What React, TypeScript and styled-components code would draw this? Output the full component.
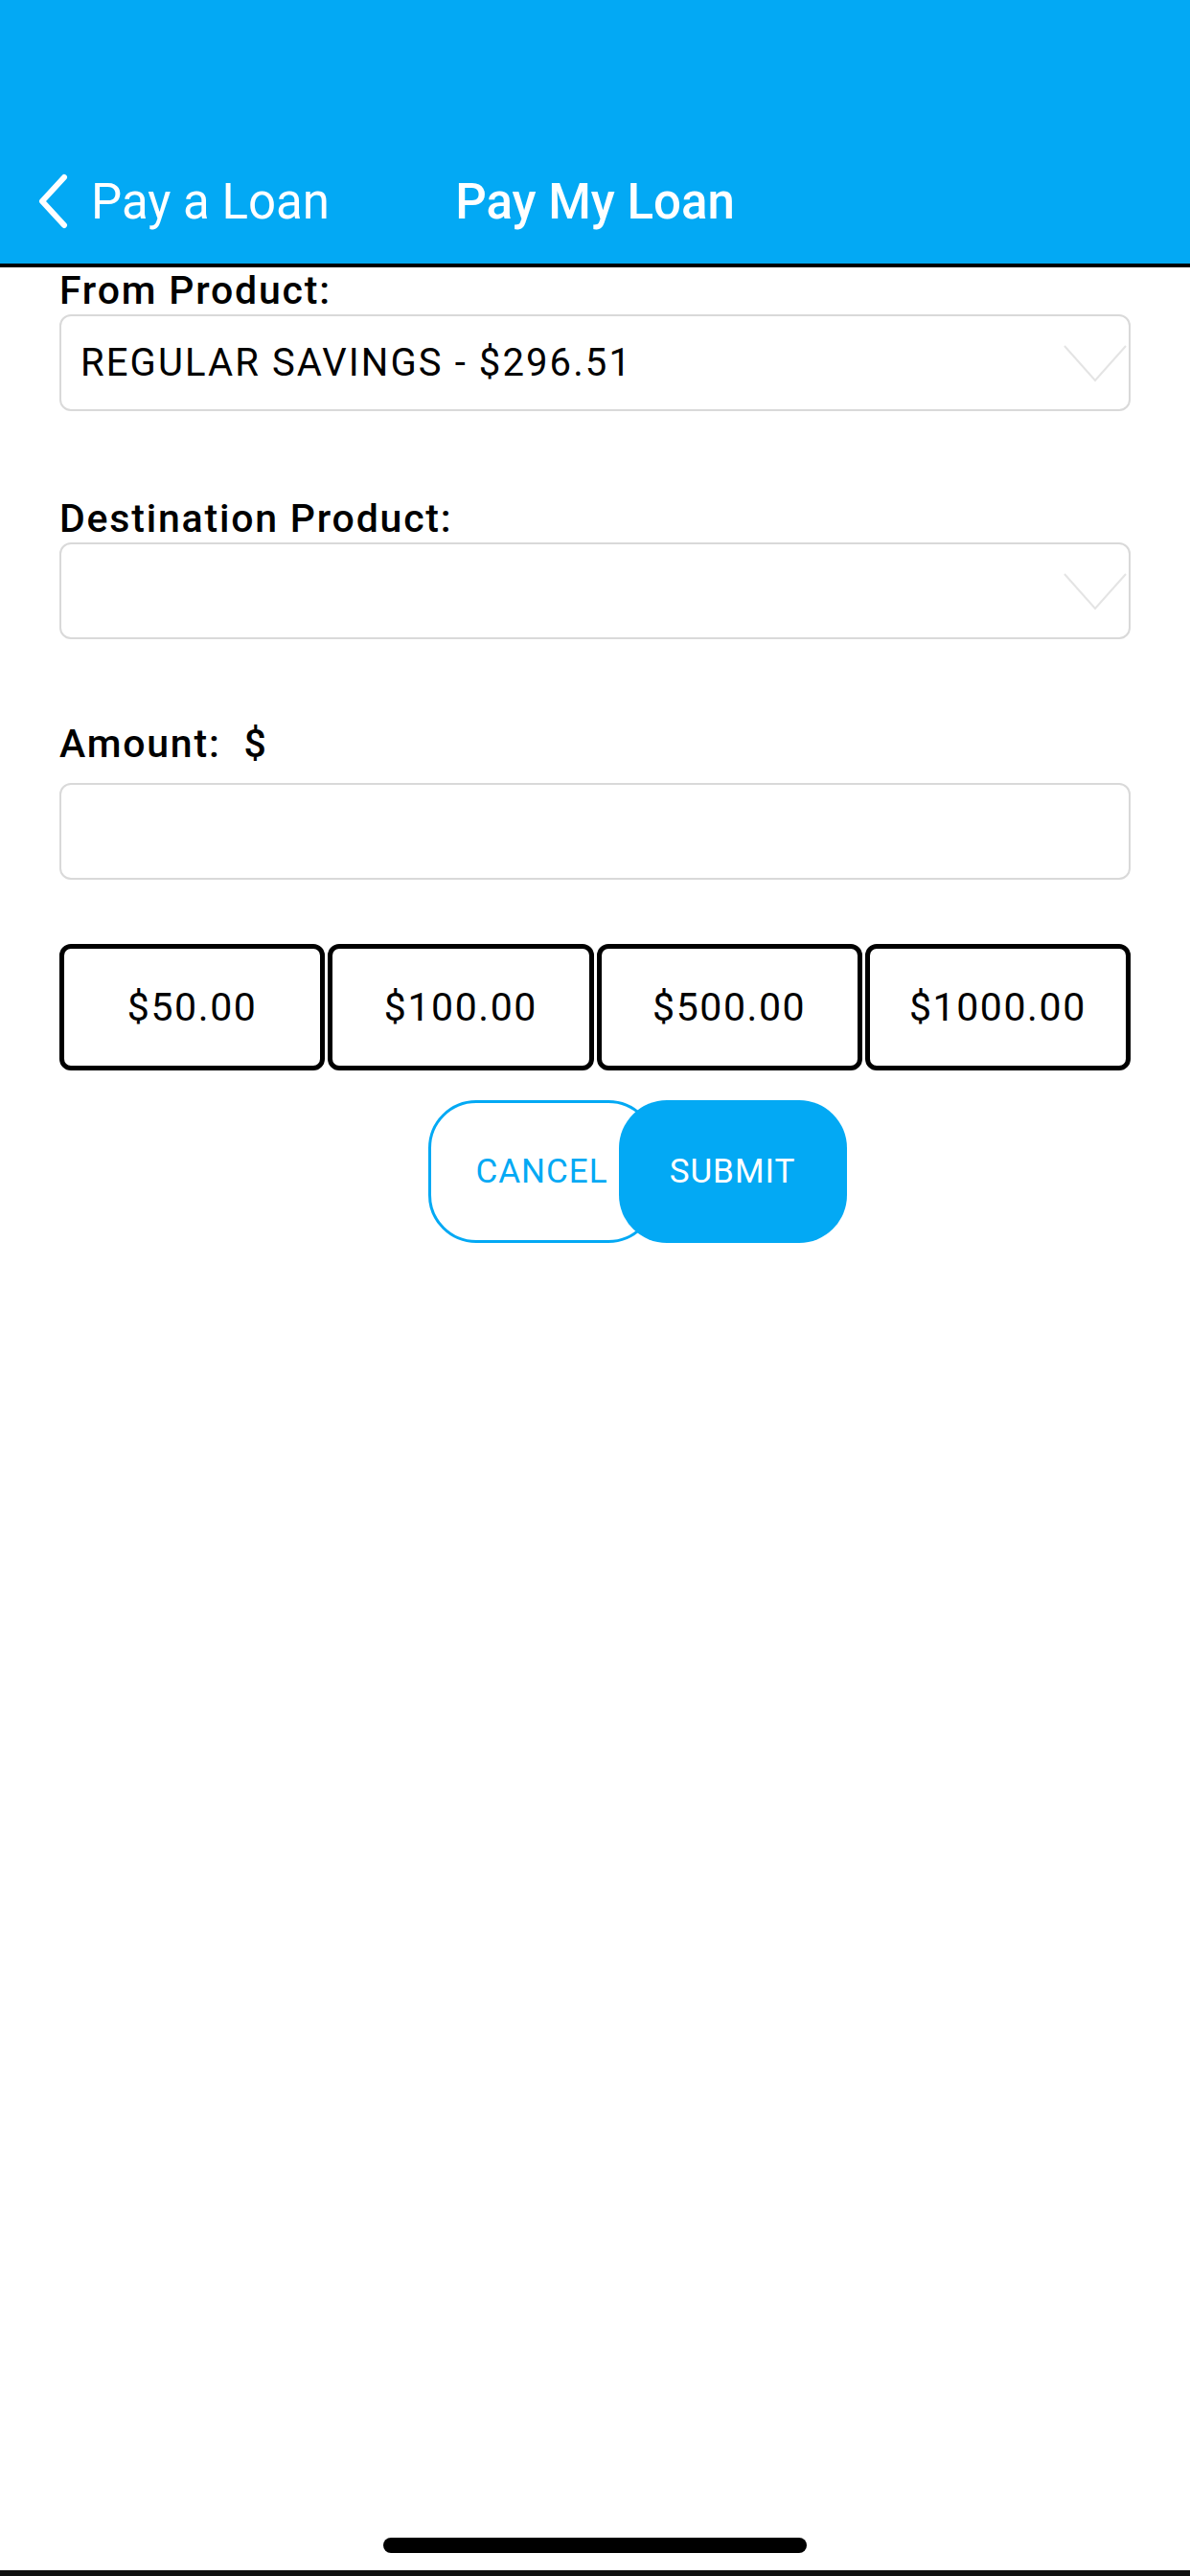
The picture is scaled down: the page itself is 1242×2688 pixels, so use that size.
import React, {FC} from "react";
import styled, {createGlobalStyle} from "styled-components";

const blue = "#03a9f4"

const GlobalStyle = createGlobalStyle`
  html, body {
    margin: 0;
    padding: 0;
    background: #fff;
  }
  body {
    font-family: Roboto, "Liberation Sans", sans-serif;
    -webkit-font-smoothing: antialiased;
  }
  * {
    box-sizing: border-box;
  }
`

const amounts = ["$50.00", "$100.00", "$500.00", "$1000.00"]

const BackChevron: FC = () => (
  <svg width="36" height="58" viewBox="0 0 36 58">
    <path d="M30 4 L7 29 L30 54" fill="none" stroke="#fff" strokeWidth="6" strokeLinecap="round" strokeLinejoin="round"/>
  </svg>
)

const SelectChevron: FC = () => (
  <svg width="66" height="40" viewBox="0 0 66 40">
    <path d="M1 2 L33 38 L65 2" fill="none" stroke="#e4e4e4" strokeWidth="2"/>
  </svg>
)

const Select: FC<{value?: string}> = ({value}) => (
  <SelectBox>
    <SelectValue>{value}</SelectValue>
    <SelectChevron/>
  </SelectBox>
)

export default function App() {
  return (
    <Page>
      <GlobalStyle/>
      <Header>
        <NavBar>
          <BackButton>
            <BackChevron/>
            <BackText>Pay a Loan</BackText>
          </BackButton>
          <Title>Pay My Loan</Title>
          <div/>
        </NavBar>
      </Header>

      <Content>
        <Label>From Product:</Label>
        <Select value="REGULAR SAVINGS - $296.51"/>

        <Label top={88}>Destination Product:</Label>
        <Select/>

        <Label top={85} bottom={16}>Amount:&nbsp; $</Label>
        <AmountInput/>

        <QuickRow>
          {amounts.map(a => (
            <QuickButton key={a}>{a}</QuickButton>
          ))}
        </QuickRow>

        <ActionRow>
          <CancelButton>CANCEL</CancelButton>
          <SubmitButton>SUBMIT</SubmitButton>
        </ActionRow>
      </Content>

      <HomeIndicator/>
      <BottomEdge/>
    </Page>
  )
}

const Page = styled.div`
  min-height: 2688px;
  display: flex;
  flex-direction: column;
  background: #fff;
`

const Header = styled.header`
  height: 279px;
  background: ${blue};
  border-bottom: 4px solid #000;
  padding-top: 145px;
`

const NavBar = styled.div`
  display: grid;
  grid-template-columns: 1fr auto 1fr;
  align-items: center;
  height: 130px;
`

const BackButton = styled.div`
  display: flex;
  align-items: center;
  padding-left: 37px;
  gap: 22px;
  color: #fff;
`

const BackText = styled.span`
  font-size: 51px;
  font-weight: 400;
`

const Title = styled.div`
  color: #fff;
  font-size: 51px;
  font-weight: 500;
`

const Content = styled.main`
  flex: 1;
  padding: 0 62px;
`

const Label = styled.div<{top?: number, bottom?: number}>`
  margin-top: ${props => props.top || 0}px;
  margin-bottom: ${props => props.bottom || 0}px;
  font-size: 41px;
  line-height: 49px;
  font-weight: 500;
  letter-spacing: 1.8px;
  color: #000;
`

const SelectBox = styled.div`
  display: flex;
  align-items: center;
  height: 101px;
  padding: 0 2px 0 20px;
  border: 2px solid #d9d9d9;
  border-radius: 12px;
  svg {
    margin-left: auto;
  }
`

const SelectValue = styled.span`
  font-size: 40px;
  letter-spacing: 2.1px;
  color: #000;
`

const AmountInput = styled.div`
  height: 101px;
  border: 2px solid #d9d9d9;
  border-radius: 12px;
`

const QuickRow = styled.div`
  display: flex;
  gap: 3px;
  margin-top: 67px;
`

const QuickButton = styled.div`
  flex: 1;
  height: 132px;
  display: flex;
  align-items: center;
  justify-content: center;
  border: 5px solid #000;
  border-radius: 12px;
  font-size: 41px;
  letter-spacing: 1.6px;
  color: #000;
`

const ActionRow = styled.div`
  display: flex;
  justify-content: center;
  margin-top: 31px;
  padding-left: 88px;
`

const PillButton = styled.div`
  width: 238px;
  height: 149px;
  display: flex;
  align-items: center;
  justify-content: center;
  border-radius: 50px;
  font-size: 35px;
  letter-spacing: 1px;
`

const CancelButton = styled(PillButton)`
  background: #fff;
  border: 3px solid ${blue};
  color: ${blue};
`

const SubmitButton = styled(PillButton)`
  margin-left: -39px;
  background: ${blue};
  color: #fff;
`

const HomeIndicator = styled.div`
  width: 442px;
  height: 16px;
  margin: 0 auto 18px;
  border-radius: 8px;
  background: #000;
`

const BottomEdge = styled.div`
  height: 6px;
  background: #111;
`
